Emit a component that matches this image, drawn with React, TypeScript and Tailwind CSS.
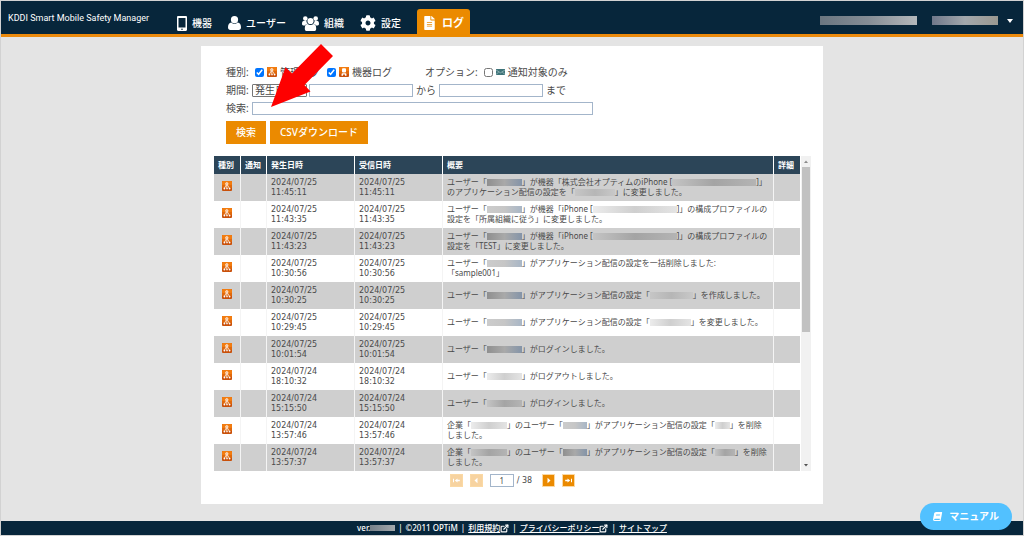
import React from "react";
import { FaCog, FaFileAlt, FaBook } from "react-icons/fa";
import { FiExternalLink } from "react-icons/fi";

type Part = string | { w: string; tone: string };

const DARK = "from-[#8f8f8f] via-[#a9a9a9] to-[#8494a8]";
const MID = "from-[#c4c4c4] via-[#a4a4a4] to-[#b4b4b4]";
const SOFT = "from-[#c6c6c6] via-[#b6b6b6] to-[#c8c8c8]";
const PALE = "from-[#ececec] via-[#cfcfcf] to-[#e4e4e4]";
const LIGHT = "from-[#cccccc] via-[#c6c6c6] to-[#a8b6c6]";

const user = (tone: string): Part => ({ w: "w-[35px]", tone });

interface LogRow {
  date: string;
  time: string;
  lines: Part[][];
}

const rows: LogRow[] = [
  {
    date: "2024/07/25",
    time: "11:45:11",
    lines: [
      ["ユーザー「", user(DARK), "」が機器「株式会社オプティムのiPhone [", { w: "w-[84px]", tone: MID }, "]」"],
      ["のアプリケーション配信の設定を「", { w: "w-[40px]", tone: SOFT }, "」に変更しました。"],
    ],
  },
  {
    date: "2024/07/25",
    time: "11:43:35",
    lines: [
      ["ユーザー「", user(LIGHT), "」が機器「iPhone [", { w: "w-[84px]", tone: PALE }, "]」の構成プロファイルの"],
      ["設定を「所属組織に従う」に変更しました。"],
    ],
  },
  {
    date: "2024/07/25",
    time: "11:43:23",
    lines: [
      ["ユーザー「", user(DARK), "」が機器「iPhone [", { w: "w-[84px]", tone: MID }, "]」の構成プロファイルの"],
      ["設定を「TEST」に変更しました。"],
    ],
  },
  {
    date: "2024/07/25",
    time: "10:30:56",
    lines: [
      ["ユーザー「", user(LIGHT), "」がアプリケーション配信の設定を一括削除しました:"],
      ["「sample001」"],
    ],
  },
  {
    date: "2024/07/25",
    time: "10:30:25",
    lines: [["ユーザー「", user(DARK), "」がアプリケーション配信の設定「", { w: "w-[43px]", tone: SOFT }, "」を作成しました。"]],
  },
  {
    date: "2024/07/25",
    time: "10:29:45",
    lines: [["ユーザー「", user(LIGHT), "」がアプリケーション配信の設定「", { w: "w-[41px]", tone: PALE }, "」を変更しました。"]],
  },
  {
    date: "2024/07/25",
    time: "10:01:54",
    lines: [["ユーザー「", user(DARK), "」がログインしました。"]],
  },
  {
    date: "2024/07/24",
    time: "18:10:32",
    lines: [["ユーザー「", user(PALE), "」がログアウトしました。"]],
  },
  {
    date: "2024/07/24",
    time: "15:15:50",
    lines: [["ユーザー「", user(MID), "」がログインしました。"]],
  },
  {
    date: "2024/07/24",
    time: "13:57:46",
    lines: [
      ["企業「", { w: "w-[36px]", tone: PALE }, "」のユーザー「", { w: "w-[24px]", tone: LIGHT }, "」がアプリケーション配信の設定「", { w: "w-[15px]", tone: PALE }, "」を削除"],
      ["しました。"],
    ],
  },
  {
    date: "2024/07/24",
    time: "13:57:37",
    lines: [
      ["企業「", { w: "w-[36px]", tone: MID }, "」のユーザー「", { w: "w-[24px]", tone: DARK }, "」がアプリケーション配信の設定「", { w: "w-[20px]", tone: MID }, "」を削除"],
      ["しました。"],
    ],
  },
];

function Masked({ w, tone }: { w: string; tone: string }) {
  return <span className={`inline-block h-[7px] align-middle bg-linear-to-r ${w} ${tone}`} />;
}

function PhoneIcon() {
  return (
    <svg viewBox="0 0 10 15" className="h-[15px] w-[10px]" aria-hidden="true">
      <path
        fill="#fff"
        fillRule="evenodd"
        d="M1.2 0h7.6C9.500 0 10 .5 10 1.200v12.600c0 .7-.5 1.200-1.200 1.200H1.200C.5 15 0 14.500 0 13.800V1.200C0 .5.5 0 1.200 0zM1.500 2v9.600h7V2zM5 12.500a.8.8 0 1 0 0 1.600.8.8 0 0 0 0-1.600z"
      />
    </svg>
  );
}

function UserIcon() {
  return (
    <svg viewBox="0 0 13 14" className="h-[14px] w-[13px]" fill="#fff" aria-hidden="true">
      <circle cx="6.500" cy="3.700" r="3.600" />
      <path d="M3.300 6.400c.9.900 1.900 1.300 3.200 1.300s2.300-.4 3.200-1.300C11.900 6.600 13 8.500 13 11.500c0 1.500-1 2.500-2.300 2.500H2.300C1 14 0 13 0 11.500c0-3 1.100-4.900 3.300-5.100z" />
    </svg>
  );
}

function GroupIcon() {
  return (
    <svg viewBox="0 0 17 15" className="h-[15px] w-[17px]" fill="#fff" aria-hidden="true">
      <circle cx="3.300" cy="2.600" r="2.300" />
      <circle cx="13.700" cy="2.600" r="2.300" />
      <path d="M1.500 5h2.900c.1 1.500.7 2.300 1.500 3-1.500.1-2.400.6-2.900 1.400H1.400C.5 9.400 0 8.900 0 8c0-1.700.5-3 1.500-3zM15.500 5h-2.900c-.1 1.500-.7 2.300-1.500 3 1.500.1 2.400.6 2.900 1.400h1.600c.9 0 1.400-.5 1.400-1.400 0-1.700-.5-3-1.500-3z" />
      <circle cx="8.500" cy="5" r="3.100" />
      <path d="M5.500 8c.9.700 1.900 1 3 1s2.100-.3 3-1c1.900.2 2.700 1.900 2.700 4.700 0 1.500-.8 2.300-2 2.300H4.800c-1.200 0-2-.8-2-2.300 0-2.800.8-4.500 2.700-4.700z" />
    </svg>
  );
}

function IconTile() {
  return (
    <>
      <rect width="10" height="10" rx="1" fill="#c9500a" />
      <rect width="10" height="7" rx="1" fill="#e0680c" />
      <rect width="10" height="4" rx="1" fill="#f27c10" />
    </>
  );
}

function AdminLogIcon() {
  return (
    <svg viewBox="0 0 10 10" className="size-[10px] shrink-0" role="img" aria-label="管理ログ">
      <IconTile />
      <circle cx="4.800" cy="2.800" r="1.200" fill="#f5b888" stroke="#fff" strokeWidth=".7" />
      <path d="M4.200 4 2.700 6.800M5.400 4 7.300 7M4.800 4v3" stroke="#fff" strokeWidth=".7" fill="none" />
      <circle cx="2.400" cy="7.500" r=".9" fill="#fff" />
      <circle cx="5" cy="7.600" r=".8" fill="#fff" />
      <circle cx="7.600" cy="7.600" r=".9" fill="#fff" />
    </svg>
  );
}

function DeviceLogIcon() {
  return (
    <svg viewBox="0 0 10 10" className="size-[10px] shrink-0" aria-hidden="true">
      <IconTile />
      <rect x="3" y="1.200" width="4" height="4.300" rx="1" fill="#fff" />
      <path d="M2.500 8.800V7.600c0-.9.600-1.400 1.500-1.400h2c.9 0 1.500.5 1.500 1.400v1.200H6V7.500H4v1.300z" fill="#fff" />
    </svg>
  );
}

function MailIcon() {
  return (
    <svg viewBox="0 0 9 6" className="h-[6px] w-[9px] shrink-0" aria-hidden="true">
      <rect width="9" height="6" fill="#3f7479" />
      <path d="M0 1 4.500 3.800 9 1M0 5.400l2.800-2.300M9 5.400 6.200 3.100" stroke="#b9d2d3" strokeWidth=".6" fill="none" />
    </svg>
  );
}

const pagerPaths = {
  first: "M3 4.700h1v3.600H3zM7.500 4.500v4L4.800 6.500zM7.500 5.800h2.300v1.400H7.500z",
  prev: "M7.500 3.800v5.400L4.500 6.500z",
  next: "M5.500 3.800v5.400l3-2.700z",
  last: "M9 4.700h1v3.600H9zM5.500 4.500v4l2.700-2zM3.200 5.800h2.300v1.400H3.200z",
};

function PagerButton({ kind, label, disabled }: { kind: keyof typeof pagerPaths; label: string; disabled?: boolean }) {
  return (
    <button
      type="button"
      aria-label={label}
      disabled={disabled}
      className="size-[13px] border border-[#fbd9a4] bg-[#eb8a00] disabled:bg-[#f7d3a0]"
    >
      <svg viewBox="1 1 11 11" className="size-[11px]" aria-hidden="true">
        <path d={pagerPaths[kind]} fill="#fff" />
      </svg>
    </button>
  );
}

function NavItem({ icon, children }: { icon: React.ReactNode; children: string }) {
  return (
    <a href="#" className="flex h-[28px] items-center gap-[5px] text-[10px] font-medium">
      {icon}
      {children}
    </a>
  );
}

const th = "border-r border-white px-1 text-left align-middle font-bold last:border-r-0";
const td = "border-r border-[#f4f4f4] p-0 px-1 align-middle last:border-r-0";
const textBox = "h-[13px] border border-[#a3b5ca] bg-white px-1 text-[10px] outline-none";

export default function App() {
  return (
    <div className="flex min-h-screen flex-col border border-[#d2d2d2] bg-[#e4e4e4] font-['Noto_Sans','Noto_Sans_CJK_JP',sans-serif] text-[10px] text-[#4a4a4a]">
      <header className="flex h-[36px] items-start border-b-3 border-[#ec8a0c] bg-[#07263b] pl-[7px] text-white">
        <h1 className="pt-[11px] font-[Roboto,sans-serif] text-[9px] leading-[12px]">
          KDDI Smart Mobile Safety Manager
        </h1>
        <nav className="ml-7 flex items-end gap-4 pt-[8px]">
          <NavItem icon={<PhoneIcon />}>機器</NavItem>
          <NavItem icon={<UserIcon />}>ユーザー</NavItem>
          <NavItem icon={<GroupIcon />}>組織</NavItem>
          <NavItem icon={<FaCog className="size-[16px]" />}>設定</NavItem>
          <a
            href="#"
            aria-current="page"
            className="flex h-[28px] items-center gap-[6px] rounded-t-[3px] bg-[#eb8a00] px-[6px] text-[11px] font-bold"
          >
            <FaFileAlt className="h-[14px] w-[13px]" />
            ログ
          </a>
        </nav>
        <div className="ml-auto flex gap-[15px] pt-[15px] pr-[10px]">
          <span className="h-[9px] w-[97px] bg-linear-to-r from-[#6b7680] via-[#858d95] to-[#b4b8bb]" />
          <button type="button" aria-label="アカウントメニュー" className="flex items-center gap-[9px]">
            <span className="h-[9px] w-[66px] bg-linear-to-r from-[#70788a] via-[#a3a8ac] to-[#9a9890]" />
            <svg viewBox="0 0 6 4" className="h-[4px] w-[6px]" aria-hidden="true">
              <path d="M0 0h6L3 4z" fill="#fff" />
            </svg>
          </button>
        </div>
      </header>

      <main className="relative mx-auto mt-[9px] mb-[17px] w-full max-w-[622px] bg-white pt-[17px] pr-3 pb-[17px] pl-[13px]">
        <form className="flex flex-col pl-3" onSubmit={(e) => e.preventDefault()}>
          <div className="flex h-[18px] items-center">
            <span className="w-[29px]">種別:</span>
            <label className="flex items-center gap-[3px]">
              <input type="checkbox" defaultChecked className="size-[9px]" />
              <AdminLogIcon />
              管理ログ
            </label>
            <label className="ml-[7px] flex items-center gap-[3px]">
              <input type="checkbox" defaultChecked className="size-[9px]" />
              <DeviceLogIcon />
              機器ログ
            </label>
            <span className="ml-[33px]">オプション:</span>
            <label className="ml-[6px] flex items-center gap-[3px]">
              <input type="checkbox" className="size-[9px]" />
              <MailIcon />
              通知対象のみ
            </label>
          </div>
          <div className="flex h-[18px] items-center">
            <label htmlFor="period" className="w-[26px]">
              期間:
            </label>
            <select
              id="period"
              className="h-[13px] w-[55px] appearance-none rounded-[1px] border border-[#767676] bg-white px-[2px] text-[10px] leading-[11px]"
            >
              <option>発生日時</option>
            </select>
            <input type="text" aria-label="開始" className={`${textBox} ml-[2px] w-[104px]`} />
            <span className="mx-[3px]">から</span>
            <input type="text" aria-label="終了" className={`${textBox} w-[104px]`} />
            <span className="ml-[3px]">まで</span>
          </div>
          <div className="flex h-[18px] items-center">
            <label htmlFor="keyword" className="w-[26px]">
              検索:
            </label>
            <input id="keyword" type="text" className={`${textBox} w-full max-w-[341px]`} />
          </div>
          <div className="mt-1 flex gap-1 text-[10px] font-medium text-white">
            <button type="submit" className="h-[23px] bg-[#eb8a00] px-[10px]">
              検索
            </button>
            <button type="button" className="h-[23px] bg-[#eb8a00] px-[10px]">
              CSVダウンロード
            </button>
          </div>
        </form>

        <div className="mt-3 flex gap-px">
          <table className="w-full table-fixed border-separate border-spacing-0 text-[8px] leading-[10px]">
            <colgroup>
              <col className="w-[27px]" />
              <col className="w-[26px]" />
              <col className="w-[88px]" />
              <col className="w-[88px]" />
              <col />
              <col className="w-[26px]" />
            </colgroup>
            <thead>
              <tr className="h-[18px] bg-[#2c4558] text-white">
                <th className={th}>種別</th>
                <th className={th}>通知</th>
                <th className={th}>発生日時</th>
                <th className={th}>受信日時</th>
                <th className={th}>概要</th>
                <th className={th}>詳細</th>
              </tr>
            </thead>
            <tbody>
              {rows.map((row, i) => (
                <tr key={i} className="h-[27px] odd:bg-[#cfcfcf] even:bg-white">
                  <td className={td}>
                    <div className="flex justify-center pb-1">
                      <AdminLogIcon />
                    </div>
                  </td>
                  <td className={td} />
                  {["occurred", "received"].map((k) => (
                    <td key={k} className={`${td} font-['DejaVu_Sans',sans-serif]`}>
                      <div className="h-[10px]">{row.date}</div>
                      <div className="h-[10px]">{row.time}</div>
                    </td>
                  ))}
                  <td className={`${td} pb-[2px]`}>
                    {row.lines.map((line, j) => (
                      <div key={j} className="h-[10px] whitespace-nowrap">
                        {line.map((part, k) =>
                          typeof part === "string" ? <span key={k}>{part}</span> : <Masked key={k} {...part} />
                        )}
                      </div>
                    ))}
                  </td>
                  <td className={td} />
                </tr>
              ))}
            </tbody>
          </table>
          <div aria-hidden="true" className="flex w-[10px] shrink-0 flex-col items-center bg-[#f1f1f1]">
            <svg viewBox="0 0 10 11" className="h-[11px] w-[10px]">
              <path d="M3 7h4L5 4.500z" fill="#8a8a8a" />
            </svg>
            <div className="h-[165px] w-2 bg-[#c1c1c1]" />
            <svg viewBox="0 0 10 11" className="mt-auto h-[11px] w-[10px]">
              <path d="M3 4h4L5 6.500z" fill="#505050" />
            </svg>
          </div>
        </div>

        <div className="mt-[3px] flex items-center justify-center text-[8px]">
          <div className="flex gap-[7px]">
            <PagerButton kind="first" label="最初のページ" disabled />
            <PagerButton kind="prev" label="前のページ" disabled />
            <input
              type="text"
              aria-label="ページ"
              defaultValue="1"
              className="h-[13px] w-[24px] border border-[#a3b5ca] bg-white text-center text-[8px] outline-none"
            />
          </div>
          <span className="mr-[10px] ml-[3px] font-['DejaVu_Sans',sans-serif]">/ 38</span>
          <div className="flex gap-[7px]">
            <PagerButton kind="next" label="次のページ" />
            <PagerButton kind="last" label="最後のページ" />
          </div>
        </div>

        <svg
          viewBox="0 0 64 64"
          className="pointer-events-none absolute top-[-2px] left-[69px] size-[64px]"
          aria-hidden="true"
        >
          <path d="M1 63 15.500 23.200 22 29.400 51 0 63 12 34.500 41 40.500 47.500z" fill="#fe0000" />
        </svg>
      </main>

      <footer className="mt-auto flex h-[14px] items-center justify-center gap-[3px] bg-[#07263b] text-[8px] leading-[14px] font-medium text-white">
        <span className="flex items-center">
          ver.
          <span className="h-[6px] w-[25px] bg-linear-to-r from-[#77818a] to-[#a3a8ac]" />
        </span>
        <span>|</span>
        <span>©2011 OPTiM</span>
        <span>|</span>
        <a href="#" className="flex items-center underline">
          利用規約
          <FiExternalLink className="size-[9px]" strokeWidth={3} />
        </a>
        <span>|</span>
        <a href="#" className="flex items-center underline">
          プライバシーポリシー
          <FiExternalLink className="size-[9px]" strokeWidth={3} />
        </a>
        <span>|</span>
        <a href="#" className="underline">
          サイトマップ
        </a>
      </footer>

      <a
        href="#"
        className="fixed right-3 bottom-[6px] flex h-[27px] items-center gap-[7px] rounded-full bg-[#52c1ff] px-[13px] text-[10px] font-bold text-white"
      >
        <FaBook className="size-[9px] skew-x-[-10deg]" />
        マニュアル
      </a>
    </div>
  );
}
